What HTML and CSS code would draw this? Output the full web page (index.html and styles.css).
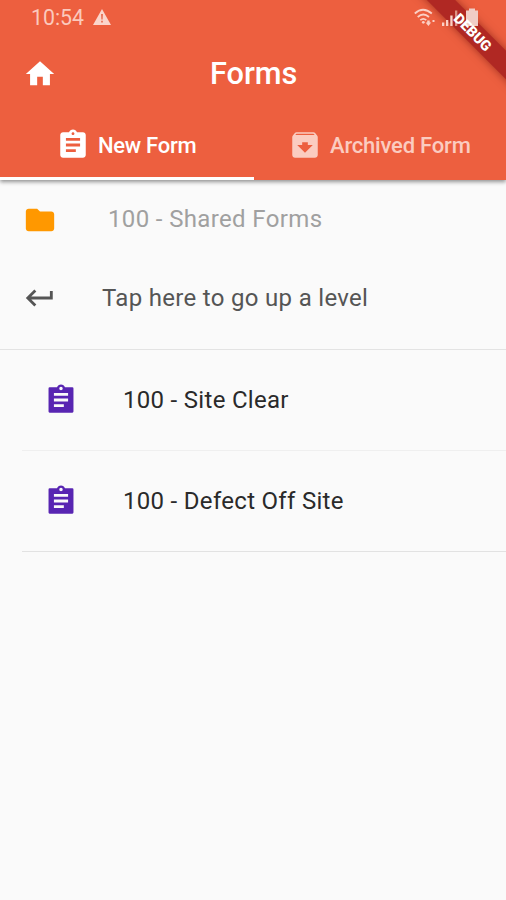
FILE: index.html
```html
<!DOCTYPE html>
<html lang="en">
<head>
<meta charset="utf-8">
<title>Forms</title>
<link rel="stylesheet" href="styles.css">
</head>
<body>
<svg class="defs" aria-hidden="true">
<symbol id="clip" viewBox="0 0 24 24"><path d="M19 3h-4.18C14.4 1.84 13.3 1 12 1c-1.300 0-2.400.84-2.820 2H5c-1.100 0-2 .9-2 2v14c0 1.100.9 2 2 2h14c1.100 0 2-.9 2-2V5c0-1.100-.9-2-2-2zm-7 0c.55 0 1 .45 1 1s-.45 1-1 1-1-.45-1-1 .45-1 1-1zm2 14H7v-2h7v2zm3-4H7v-2h10v2zm0-4H7V7h10v2z"/></symbol>
<symbol id="clip-sharp" viewBox="0 0 24 24"><path d="M20 3h-5.180C14.400 1.840 13.300 1 12 1s-2.400.84-2.820 2H4q-.8 0-.8.8v16.400q0 .8.8.8h16q.8 0 .8-.8V3.800q0-.8-.8-.8zm-8-.3c.7 0 1.200.55 1.200 1.200s-.5 1.200-1.200 1.200-1.200-.55-1.200-1.200.5-1.200 1.200-1.200zm2 14.300H7v-2h7v2zm3-4H7v-2h10v2zm0-4H7V7h10v2z"/></symbol>
</svg>
<div class="app">
<header class="header">
  <div class="status">
    <span class="time">10:54</span>
    <svg class="warn" viewBox="0 0 18 16"><path fill="#fbd5cb" d="M9 0 18 16H0z"/><path fill="#e8745a" d="M8 5h2l-.3 5.500H8.300zM8.100 11.700h1.800v1.800H8.100z"/></svg>
    <svg class="signals" viewBox="0 0 66 20">
      <g fill="none" stroke="#fbd0c5" stroke-width="1.700"><path d="M.8 5.500Q9-2 17.800 5.500M3.700 9Q9.300 4 15 9M6.300 12.200Q9.300 9.500 12.300 12.200"/></g>
      <circle cx="9.300" cy="14.300" r="1.400" fill="#fbd0c5"/>
      <path fill="#fbd0c5" d="M13.200 12.500h2.500v2H17.200L14.400 18l-2.800-3.500H13.200zM18.500 12h2v2h-2zM28 14.500h2.300V18H28zM32 12h2.300v6H32zM36.300 7.500h2.300V18h-2.300z"/>
      <path fill="#dd9183" d="M41 2.500h2.300V18H41z"/>
      <path fill="#f0cdc6" d="M55 2.500V.5h6v2h3V18H52V2.500z"/>
    </svg>
  </div>
  <div class="appbar">
    <svg class="home" viewBox="0 0 24 24"><path d="M10 20v-6h4v6h5v-8h3L12 3 2 12h3v8z"/></svg>
    <h1>Forms</h1>
  </div>
  <nav class="tabs">
    <div class="tab active"><svg class="icon"><use href="#clip"/></svg><span class="new">New Form</span></div>
    <div class="tab"><svg class="icon" viewBox="0 0 24 24"><path d="M20.540 5.230l-1.390-1.680C18.880 3.210 18.470 3 18 3H6c-.47 0-.88.21-1.160.55L3.460 5.230C3.170 5.570 3 6.020 3 6.500V19c0 1.100.9 2 2 2h14c1.100 0 2-.9 2-2V6.500c0-.48-.17-.93-.46-1.270zM12 17.500L6.500 12H10v-2h4v2h3.500L12 17.500zM5.120 5l.81-1h12l.94 1H5.120z"/></svg><span class="arch">Archived Form</span></div>
  </nav>
  <div class="corner"><div class="ribbon band"></div></div>
  <div class="corner front"><div class="ribbon">DEBUG</div></div>
</header>
<main>
  <div class="row shared"><svg class="icon folder" viewBox="0 0 24 24"><path d="M10 4H4c-1.100 0-1.990.9-1.990 2L2 18c0 1.100.9 2 2 2h16c1.100 0 2-.9 2-2V8c0-1.100-.9-2-2-2h-8l-2-2z"/></svg><span class="t1">100 - Shared Forms</span></div>
  <div class="row up"><svg class="icon" viewBox="0 0 24 24"><path d="M19 7v4H5.830l3.580-3.590L8 6l-6 6 6 6 1.410-1.410L5.830 13H21V7z"/></svg><span class="t2">Tap here to go up a level</span></div>
  <div class="row form"><svg class="icon"><use href="#clip-sharp"/></svg><span class="t3">100 - Site Clear</span></div>
  <div class="row form last"><svg class="icon"><use href="#clip-sharp"/></svg><span class="t4">100 - Defect Off Site</span></div>
</main>
</div>
</body>
</html>
```
FILE: styles.css
```css
* { box-sizing: border-box; }
body { margin: 0; font-family: Roboto, sans-serif; background: #fafafa; }
.defs { position: absolute; width: 0; height: 0; }
.app { width: 506px; height: 900px; overflow: hidden; background: #fafafa; }
svg { display: block; flex: none; fill: currentColor; }
span { white-space: nowrap; }
.header { position: relative; height: 180px; background: #ed5f3f; color: #fff; box-shadow: 0 2px 4px rgba(0, 0, 0, .42); }
.status { display: flex; height: 35px; padding-left: 31px; color: #fbc9bd; }
.time { width: 62px; font-size: 21.300px; line-height: 36px; }
.warn { width: 18px; height: 16px; margin-top: 9px; }
.signals { position: relative; z-index: 2; width: 66px; height: 20px; margin: 8px 0 0 303px; }
.appbar { display: flex; align-items: center; height: 76px; padding: 1px 0 0 23px; }
.home { width: 34px; height: 34px; }
h1 { margin: 0 0 0 153px; font-size: 30.700px; font-weight: 500; line-height: 36px; }
.tabs { display: grid; grid-template-columns: 254px 252px; height: 69px; }
.tab { display: flex; align-items: center; gap: 8px; padding: 0 0 2px 34px; font-size: 22px; font-weight: 500; color: #fbccc0; }
.tab.active { padding: 1px 0 0 56px; color: #fff; border-bottom: 3px solid #fff; }
.tab span { padding-top: 1px; }
.new { letter-spacing: -.28px; }
.arch { letter-spacing: -.2px; }
.icon { width: 34px; height: 34px; }
.corner { position: absolute; z-index: 1; top: 0; right: 0; width: 110px; height: 110px; overflow: hidden; }
.front { z-index: 3; }
.ribbon { position: absolute; left: -1px; top: 22px; width: 156px; height: 20px; transform: rotate(45deg); font-size: 14.500px; font-weight: 900; line-height: 20px; text-align: center; }
.front .ribbon { left: -2px; top: 23px; }
.band { background: #b02823; box-shadow: 0 0 9px rgba(80, 0, 0, .5); }
main { height: 720px; }
.row { display: flex; align-items: center; font-size: 24px; }
.shared { height: 79px; padding-left: 23px; color: #a0a0a0; }
.shared span { margin: -1px 0 0 51px; letter-spacing: .36px; }
.folder { color: #ff9800; }
.up { height: 91px; padding: 0 0 12px 23px; color: #555; border-bottom: 1px solid #e3e3e3; }
.up span { margin-left: 45px; letter-spacing: .31px; }
.form { height: 101px; margin-left: 22px; padding-left: 22px; color: #2a2a2a; border-bottom: 1px solid #efefef; }
.form .icon { color: #5825b2; }
.form span { margin: -1px 0 0 45px; letter-spacing: .3px; }
.last { border-color: #e2e2e2; }
```
